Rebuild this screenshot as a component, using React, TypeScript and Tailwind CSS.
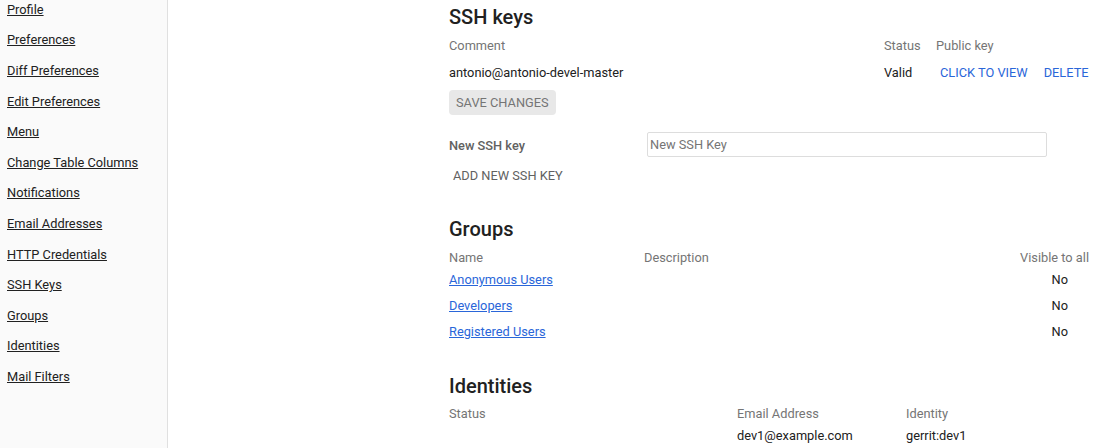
import React from "react";

const sideLinks = [
  "Profile",
  "Preferences",
  "Diff Preferences",
  "Edit Preferences",
  "Menu",
  "Change Table Columns",
  "Notifications",
  "Email Addresses",
  "HTTP Credentials",
  "SSH Keys",
  "Groups",
  "Identities",
  "Mail Filters",
];

const groups = ["Anonymous Users", "Developers", "Registered Users"];

export default function App() {
  return (
    <div
      className="flex w-[1118px] h-[448px] overflow-hidden bg-white text-[12.8px] text-[#212121]"
      style={{ fontFamily: "Roboto, 'Noto Sans', sans-serif" }}
    >
      <aside className="w-[168px] shrink-0 bg-[#fafafa] border-r border-[#e0e0e0]">
        <ul className="mt-[-5px] pl-[7px]">
          {sideLinks.map((l) => (
            <li key={l} className="h-[30.6px] flex items-center">
              <a className="underline text-[#212121] leading-none">{l}</a>
            </li>
          ))}
        </ul>
      </aside>

      <main className="flex-1 pl-[281px]">
        <div className="w-[640px]">
          {/* SSH keys */}
          <h2 className="mt-[5px] h-[24px] flex items-center text-[20px] font-medium text-[#212121]">
            SSH keys
          </h2>
          <div className="mt-[7px] h-[20px] grid grid-cols-[435px_52px_1fr] items-center text-[#757575]">
            <div>Comment</div>
            <div>Status</div>
            <div>Public key</div>
          </div>
          <div className="mt-[7px] h-[20px] grid grid-cols-[435px_52px_1fr] items-center">
            <div>antonio@antonio-devel-master</div>
            <div>Valid</div>
            <div className="flex items-center whitespace-nowrap text-[#2a66d9]">
              <span className="ml-[4px]">CLICK TO VIEW</span>
              <span className="ml-[16px]">DELETE</span>
            </div>
          </div>
          <button className="mt-[7px] h-[25px] px-[7px] rounded-[4px] bg-[#e8e8e8] text-[#757575] flex items-center">
            SAVE CHANGES
          </button>
          <div className="mt-[17px] h-[25px] flex items-center">
            <div className="w-[198px] font-medium text-[#616161] pt-[2px]">New SSH key</div>
            <input
              className="w-[400px] h-[25px] border border-[#dddddd] rounded-[2px] px-[2px] text-[12.8px] outline-none placeholder:text-[#757575]"
              placeholder="New SSH Key"
            />
          </div>
          <div className="mt-[9px] h-[20px] flex items-center pl-[4px] text-[#616161]">
            ADD NEW SSH KEY
          </div>

          {/* Groups */}
          <h2 className="mt-[31px] h-[24px] flex items-center text-[20px] font-medium text-[#212121]">
            Groups
          </h2>
          <div className="mt-[7px] h-[20px] grid grid-cols-[195px_1fr_100px] items-center text-[#757575]">
            <div>Name</div>
            <div>Description</div>
            <div className="text-right">Visible to all</div>
          </div>
          {groups.map((g, i) => (
            <div
              key={g}
              className={`h-[26px] grid grid-cols-[195px_1fr_100px] items-center ${i === 0 ? "mt-[-1px]" : ""}`}
            >
              <a className="underline text-[#2a66d9]">{g}</a>
              <div />
              <div className="text-right pr-[21px]">No</div>
            </div>
          ))}

          {/* Identities */}
          <h2 className="mt-[29px] h-[24px] flex items-center text-[20px] font-medium text-[#212121]">
            Identities
          </h2>
          <div className="mt-[6px] h-[20px] grid grid-cols-[288px_169px_1fr] items-center text-[#757575]">
            <div>Status</div>
            <div>Email Address</div>
            <div>Identity</div>
          </div>
          <div className="mt-[2px] h-[20px] grid grid-cols-[288px_169px_1fr] items-center">
            <div />
            <div>dev1@example.com</div>
            <div>gerrit:dev1</div>
          </div>
        </div>
      </main>
    </div>
  );
}
